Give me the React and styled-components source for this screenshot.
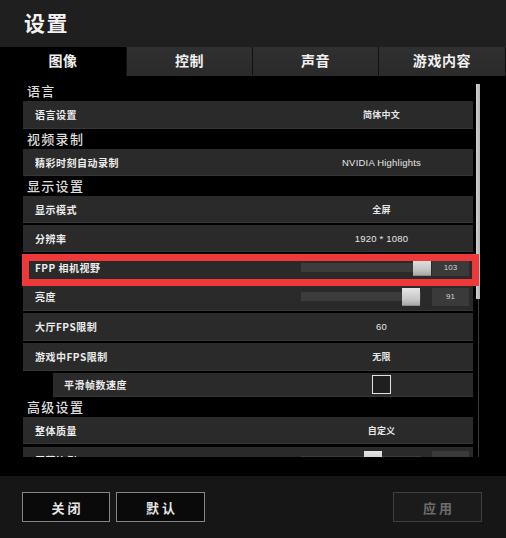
import React from 'react';
import styled, { createGlobalStyle } from 'styled-components';

const Global = createGlobalStyle`
  html, body { margin: 0; padding: 0; background: #000; }
  body { font-family: "Noto Sans CJK SC", "Noto Sans", sans-serif; }
  * { box-sizing: border-box; }
`;

const Frame = styled.div`
  width: 506px;
  height: 538px;
  display: flex;
  flex-direction: column;
  background: #000;
  overflow: hidden;
`;

const Header = styled.header`
  height: 47px;
  flex: none;
  background: #1f1f1f;
  display: flex;
  align-items: center;
  padding: 0 0 2px 24px;
`;

const Title = styled.h1`
  margin: 0;
  font-size: 21px;
  line-height: 1;
  font-weight: 700;
  color: #f2f2f2;
  letter-spacing: 1.5px;
`;

const TabBar = styled.nav`
  height: 29px;
  flex: none;
  display: grid;
  grid-template-columns: 126px 125px 125px 126px;
  column-gap: 1px;
  padding-right: 1px;
  background: #111;
`;

const Tab = styled.div`
  display: flex;
  align-items: center;
  justify-content: center;
  padding-bottom: 3px;
  background: ${p => (p.$active ? '#000' : 'linear-gradient(#303030, #2a2a2a)')};
  color: #f0f0f0;
  font-size: 14px;
  font-weight: 700;
  letter-spacing: 0.6px;
`;

const Viewport = styled.div`
  position: relative;
  height: 381px;
  flex: none;
  overflow: hidden;
`;

const List = styled.div`
  display: flex;
  flex-direction: column;
  padding: 5px 33px 0 23px;
`;

const Heading = styled.div`
  height: 20px;
  line-height: 20px;
  padding-left: 4px;
  font-size: 13px;
  font-weight: 500;
  color: #dedede;
  letter-spacing: 1.3px;
`;

const Row = styled.div`
  position: relative;
  flex: none;
  height: ${p => p.$h}px;
  margin-bottom: ${p => p.$gap}px;
  margin-left: ${p => p.$indent}px;
  background: #2a2a2a;
  border-bottom: 1px solid #363636;
  display: grid;
  grid-template-columns: 1fr 183px;
  align-items: center;
`;

const Label = styled.div`
  padding-left: ${p => (p.$indent ? 11 : 12)}px;
  font-size: 10px;
  font-weight: 700;
  color: #ececec;
  letter-spacing: 0.5px;
  white-space: nowrap;
`;

const Value = styled.div`
  text-align: center;
  font-family: "Liberation Sans", "Noto Sans CJK SC", sans-serif;
  font-size: ${p => (p.$latin ? 9.5 : 9)}px;
  font-weight: ${p => (p.$latin ? 400 : 700)};
  color: #e6e6e6;
  letter-spacing: 0.2px;
  white-space: nowrap;
`;

const SliderCell = styled.div`
  display: flex;
  align-items: center;
  padding: 0 4px 0 11px;
  height: 100%;
`;

const Track = styled.div`
  position: relative;
  width: ${p => p.$w}px;
  height: 9px;
  background: #3c3c3c;
`;

const Thumb = styled.div`
  position: absolute;
  top: 50%;
  width: 18px;
  height: 18px;
  margin-top: -9px;
  background: linear-gradient(#e6e6e6, #c4c4c4 70%, #a8a8a8);
  border-bottom: 1px solid #8a8a8a;
`;

const NumBox = styled.div`
  margin-left: auto;
  width: 37px;
  height: 18px;
  background: #3a3a3a;
  color: #d6d6d6;
  font-family: "Liberation Sans", sans-serif;
  font-size: 8px;
  display: flex;
  align-items: center;
  justify-content: center;
`;

const CheckBox = styled.div`
  justify-self: center;
  width: 19px;
  height: 19px;
  border: 1.5px solid #e2e2e2;
  background: #1f1f1f;
`;

const Highlight = styled.div`
  position: absolute;
  left: -1px;
  right: -6px;
  top: 0;
  bottom: -6px;
  border: 7px solid #ef3838;
  z-index: 3;
  pointer-events: none;
`;

const ScrollTrack = styled.div`
  position: absolute;
  right: 26px;
  top: 8px;
  bottom: 0;
  width: 4px;
  background: linear-gradient(to right, transparent 2px, #3a3a3a 2px, #3a3a3a 3px, transparent 3px);
  z-index: 1;
`;

const ScrollThumb = styled.div`
  height: 215px;
  background: linear-gradient(to right, #d0d0d0, #b4b4b4);
`;

const Footer = styled.footer`
  margin-top: auto;
  height: 62px;
  flex: none;
  background: #161616;
  display: flex;
  align-items: center;
  gap: 6px;
  padding: 0 24px 0 22px;
`;

const Button = styled.button`
  width: ${p => p.$w}px;
  height: 30px;
  margin-left: ${p => (p.$push ? 'auto' : '0')};
  border: 1px solid ${p => (p.$disabled ? '#3f3f3f' : '#868686')};
  background: ${p => (p.$disabled ? '#1b1b1b' : '#0a0a0a')};
  color: ${p => (p.$disabled ? '#6c6c6c' : '#e6e6e6')};
  font-family: "Noto Sans CJK SC", sans-serif;
  font-size: 13px;
  font-weight: 700;
  letter-spacing: 3px;
  padding: 0 0 0 3px;
  display: flex;
  align-items: center;
  justify-content: center;
`;

const items = [
  { type: 'h', text: '语言' },
  { type: 'r', label: '语言设置', value: '简体中文', h: 28 },
  { type: 'h', text: '视频录制' },
  { type: 'r', label: '精彩时刻自动录制', value: 'NVIDIA Highlights', latin: true },
  { type: 'h', text: '显示设置' },
  { type: 'r', label: '显示模式', value: '全屏', gap: 2 },
  { type: 'r', label: '分辨率', value: '1920 * 1080', latin: true, gap: 2 },
  { type: 's', label: 'FPP 相机视野', track: 130, pos: 112, num: '103', gap: 2, mark: true },
  { type: 's', label: '亮度', track: 120, pos: 101, num: '91', gap: 2, h: 28 },
  { type: 'r', label: '大厅FPS限制', value: '60', latin: true, gap: 2, h: 28 },
  { type: 'r', label: '游戏中FPS限制', value: '无限', gap: 2, h: 28 },
  { type: 'c', label: '平滑帧数速度', h: 24, indent: 30 },
  { type: 'h', text: '高级设置' },
  { type: 'r', label: '整体质量', value: '自定义', gap: 3 },
  { type: 's', label: '屏幕比例', track: 120, pos: 63, num: '100' },
];

const tabs = ['图像', '控制', '声音', '游戏内容'];

export default function App() {
  return (
    <>
      <Global />
      <Frame>
        <Header>
          <Title>设置</Title>
        </Header>
        <TabBar>
          {tabs.map((t, i) => (
            <Tab key={t} $active={i === 0}>{t}</Tab>
          ))}
        </TabBar>
        <Viewport>
          <List>
            {items.map((it, i) => {
              if (it.type === 'h') return <Heading key={i}>{it.text}</Heading>;
              const rowProps = { $h: it.h || 27, $gap: it.gap || 0, $indent: it.indent || 0 };
              return (
                <Row key={i} {...rowProps}>
                  <Label $indent={!!it.indent}>{it.label}</Label>
                  {it.type === 'r' && <Value $latin={!!it.latin}>{it.value}</Value>}
                  {it.type === 's' && (
                    <SliderCell>
                      <Track $w={it.track}>
                        <Thumb style={{ left: it.pos }} />
                      </Track>
                      <NumBox>{it.num}</NumBox>
                    </SliderCell>
                  )}
                  {it.type === 'c' && <CheckBox />}
                  {it.mark && <Highlight />}
                </Row>
              );
            })}
          </List>
          <ScrollTrack>
            <ScrollThumb />
          </ScrollTrack>
        </Viewport>
        <Footer>
          <Button $w={88}>关闭</Button>
          <Button $w={89}>默认</Button>
          <Button $w={89} $push $disabled>应用</Button>
        </Footer>
      </Frame>
    </>
  );
}
